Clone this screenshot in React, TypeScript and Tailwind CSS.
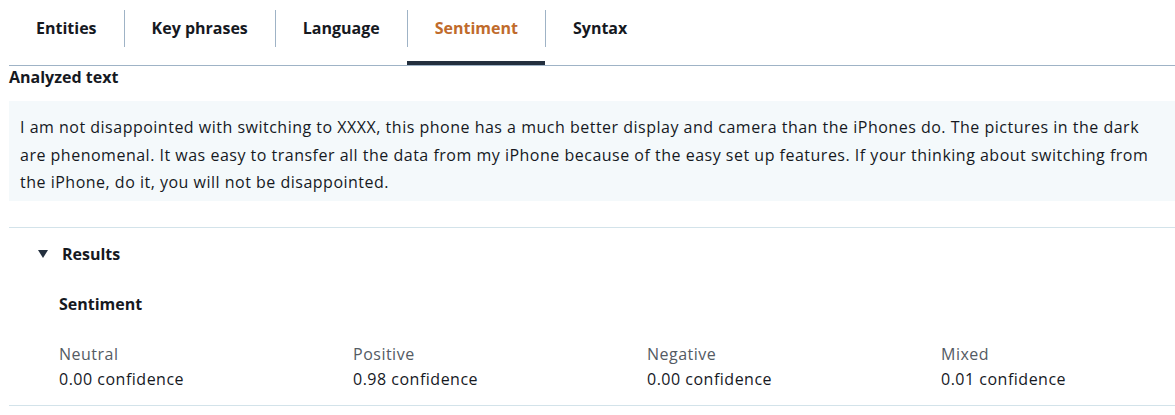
import React from 'react';

const tabs = ['Entities', 'Key phrases', 'Language', 'Sentiment', 'Syntax'];
const active = 'Sentiment';

const scores = [
  { label: 'Neutral', value: '0.00' },
  { label: 'Positive', value: '0.98' },
  { label: 'Negative', value: '0.00' },
  { label: 'Mixed', value: '0.01' },
];

export default function App() {
  return (
    <div className="w-[1175px] h-[415px] overflow-hidden bg-white text-[#16191f] font-['Open_Sans',Arial,sans-serif]">
      <div className="pl-[9px]">
        {/* tabs */}
        <div className="flex border-b border-[#9fb3c6]">
          {tabs.map((t, i) => (
            <div
              key={t}
              className={`h-[65px] pt-[10px] ${t === active ? 'border-b-4 border-[#232f3e]' : ''}`}
            >
              <span
                className={`flex h-[37px] items-center px-[27px] pb-[2px] text-[16px] font-bold ${
                  i > 0 ? 'border-l border-[#9fb3c6]' : ''
                } ${t === active ? 'text-[#c06b2c]' : 'text-[#16191f]'}`}
              >
                {t}
              </span>
            </div>
          ))}
        </div>

        <div className="text-[16px] font-bold leading-[22px]">Analyzed text</div>

        <div className="mt-[13px] h-[100px] bg-[#f4f9fb] px-[11px] pt-[13px] text-[16px] leading-[27.5px] tracking-[0.5px]">
          I am not disappointed with switching to XXXX, this phone has a much better display and camera than the
          iPhones do. The pictures in the dark are phenomenal. It was easy to transfer all the data from my iPhone
          because of the easy set up features. If your thinking about switching from the iPhone, do it, you will
          not be disappointed.
        </div>

        <div className="mt-[26px] border-t border-[#d3e3ea]">
          <div className="flex h-[52px] items-center gap-[14px] pl-[29px]">
            <svg width="10" height="8" viewBox="0 0 10 8">
              <polygon points="0,0 10,0 5,8" fill="#232f3e" />
            </svg>
            <span className="text-[16px] font-bold">Results</span>
          </div>

          <div className="pl-[50px]">
            <div className="mt-[13px] text-[16px] font-bold leading-[22px]">Sentiment</div>
            <div className="mt-[27px] grid grid-cols-[294px_294px_294px_294px] pb-[13px]">
              {scores.map((s) => (
                <div key={s.label} className="text-[16px] leading-[25px] tracking-[0.5px]">
                  <div className="text-[#545b64]">{s.label}</div>
                  <div>{s.value} confidence</div>
                </div>
              ))}
            </div>
          </div>
        </div>
        <div className="border-t border-[#d3e3ea]" />
      </div>
    </div>
  );
}
